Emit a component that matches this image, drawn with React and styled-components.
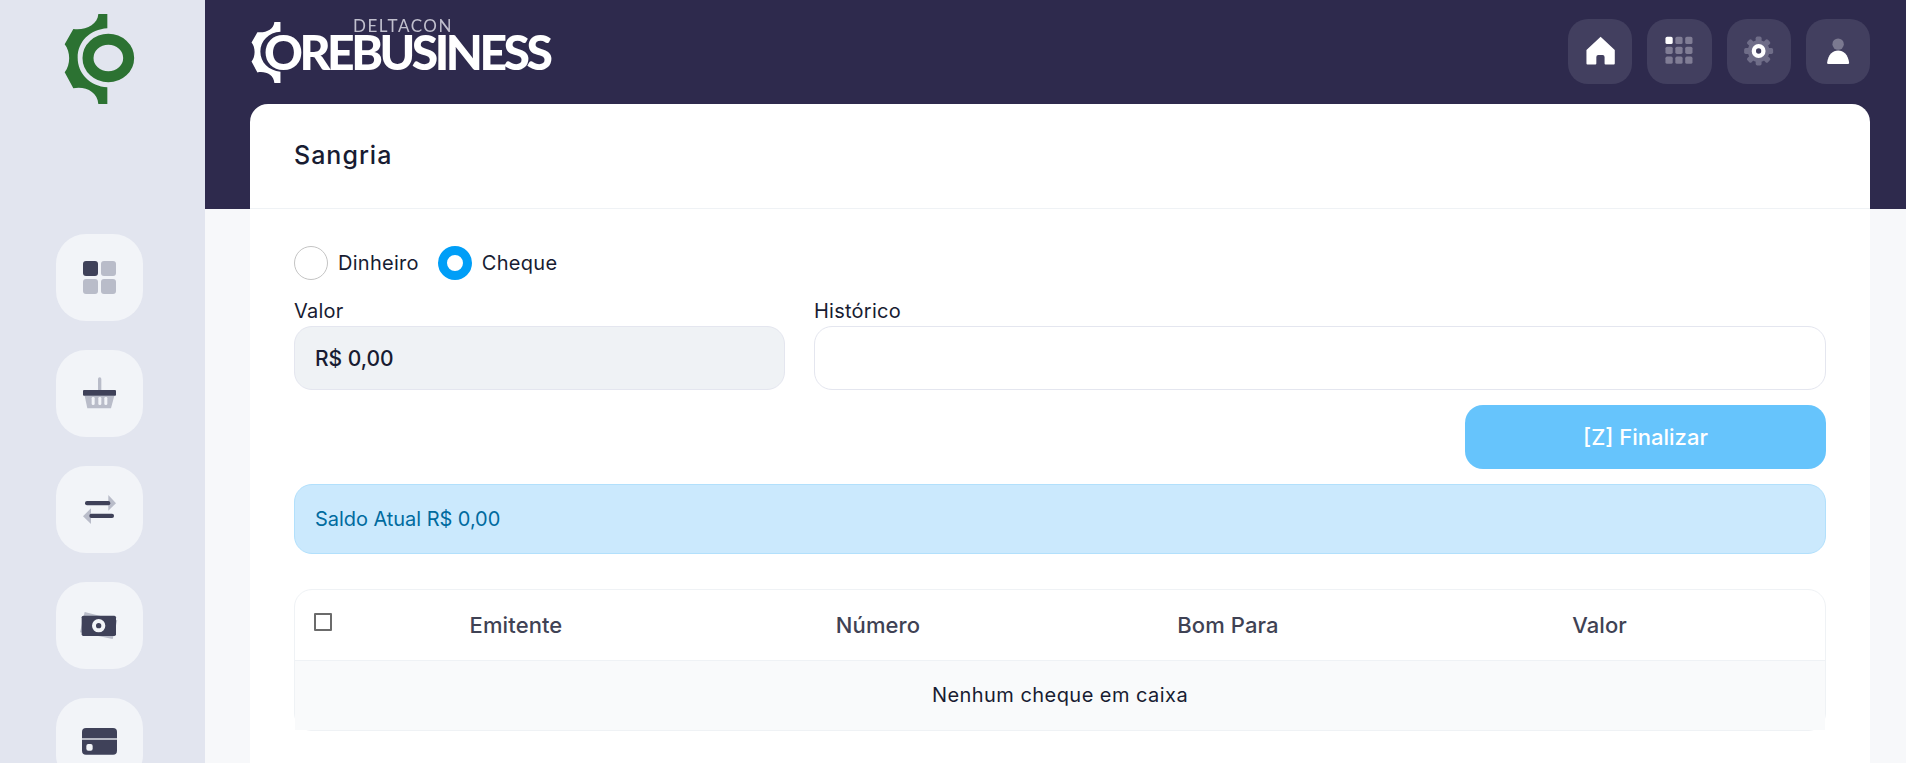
import React from "react";
import styled, { createGlobalStyle } from "styled-components";

const Global = createGlobalStyle`
  html, body { margin: 0; height: 100%; overflow: hidden; background: #f7f8fa; }
  body { font-family: Inter, "Noto Sans", sans-serif; color: #181c32; }
  * { box-sizing: border-box; }
`;

const Shell = styled.div`
  display: flex;
  width: 100%;
  height: 763px;
  overflow: hidden;
`;
const Sidebar = styled.aside`
  flex: 0 0 205px;
  background: #e2e5ef;
  display: flex;
  flex-direction: column;
  align-items: flex-start;
  padding-left: 56px;
`;
const SideLogo = styled.svg`
  display: block;
  flex: none;
  margin-left: -6px;
  width: 100px;
  height: 115px;
  filter: blur(0.3px);
`;
const SideNav = styled.nav`
  margin-top: 119px;
  display: flex;
  flex-direction: column;
  gap: 29px;
`;
const SideButton = styled.a`
  display: block;
  flex: none;
  width: 87px;
  height: 87px;
  border-radius: 30px;
  background: #f2f4f8;
  svg { display: block; width: 87px; height: 87px; }
`;
const Main = styled.main`
  flex: 1;
  min-width: 0;
  padding: 0 36px 0 45px;
  background: linear-gradient(#2e2a4d 209px, #f7f8fa 209px);
`;
const TopBar = styled.header`
  height: 104px;
  display: flex;
  justify-content: space-between;
  align-items: flex-start;
`;
const Brand = styled.div`
  display: flex;
  align-items: flex-start;
  margin: 22px 0 0 1px;
  color: #fff;
  filter: blur(0.45px);
`;
const BrandGear = styled.svg`
  display: block;
  flex: none;
  width: 30px;
  height: 61px;
`;
const BrandText = styled.div`
  display: flex;
  flex-direction: column;
  margin-left: -17px;
`;
const BrandSmall = styled.span`
  font-family: Lato, sans-serif;
  font-size: 17px;
  line-height: 12px;
  letter-spacing: 1.55px;
  color: #c0bfcd;
  margin: -2px 0 0 89px;
  height: 12px;
`;
const BrandWord = styled.span`
  font-family: Lato, sans-serif;
  font-weight: 900;
  font-size: 48px;
  line-height: 40px;
  letter-spacing: -3.5px;
  white-space: nowrap;
`;
const TopActions = styled.div`
  display: flex;
  gap: 15px;
  margin-top: 19px;
`;
const TopButton = styled.a`
  display: block;
  width: 64.25px;
  height: 65px;
  border-radius: 20px;
  background: #423f5f;
  svg { display: block; width: 100%; height: 65px; }
`;
const Card = styled.section`
  height: 659px;
  background: #fff;
  border-radius: 18px 18px 0 0;
`;
const CardHeader = styled.div`
  height: 105px;
  padding: 0 44px 2px;
  display: flex;
  align-items: center;
  border-bottom: 1px solid #eff2f5;
`;
const CardTitle = styled.h1`
  margin: 0;
  font-size: 25px;
  font-weight: 500;
  letter-spacing: 1px;
  color: #181c32;
`;
const CardBody = styled.div`
  padding: 37px 44px 0;
`;
const RadioRow = styled.div`
  display: flex;
  align-items: center;
  height: 34px;
  gap: 19px;
`;
const RadioLabel = styled.label`
  display: flex;
  align-items: center;
  gap: 10px;
  font-size: 20px;
  letter-spacing: 0.28px;
  color: #181c32;
`;
const RadioInput = styled.input`
  appearance: none;
  margin: 0;
  width: 34px;
  height: 34px;
  border-radius: 50%;
  border: 1px solid #c4c4c4;
  background: #fff;
  &:checked {
    border: 9px solid #009ef7;
  }
`;
const FormGrid = styled.div`
  display: grid;
  grid-template-columns: 491px 1fr;
  column-gap: 29px;
  margin-top: 12px;
`;
const Field = styled.div`
  display: flex;
  flex-direction: column;
`;
const FieldLabel = styled.label`
  height: 34px;
  padding-top: 7px;
  font-size: 20px;
  line-height: 24px;
  letter-spacing: 0.25px;
  color: #181c32;
`;
const TextInput = styled.input`
  width: 100%;
  height: 64px;
  padding: 0 20px;
  border: 1px solid #e4e6ef;
  border-radius: 18px;
  outline: none;
  font: 500 21px Inter, sans-serif;
  color: #181c32;
  background: ${(p) => (p.$filled ? "#eff2f5" : "#fff")};
`;
const Actions = styled.div`
  display: flex;
  justify-content: flex-end;
  margin-top: 15px;
`;
const SubmitButton = styled.button`
  width: 361px;
  height: 64px;
  border: 0;
  border-radius: 18px;
  background: #66c4fc;
  color: #fff;
  font: 500 22px Inter, sans-serif;
`;
const Alert = styled.div`
  margin-top: 15px;
  height: 70px;
  padding: 0 20px;
  display: flex;
  align-items: center;
  border: 1px solid #b2e0fc;
  border-radius: 18px;
  background: #cbe9fd;
  color: #006b9f;
  font-size: 20px;
  letter-spacing: -0.05px;
`;
const TableWrap = styled.div`
  margin-top: 35px;
  border: 1px solid #eff2f5;
  border-radius: 18px;
  height: 142px;
`;
const Table = styled.table`
  width: 100%;
  table-layout: fixed;
  border-collapse: collapse;
`;
const Head = styled.th`
  height: 70px;
  border-bottom: 1px solid #eff2f5;
  padding: ${(p) => (p.$last ? "0 18px 0 0" : "0")};
  font-size: 22px;
  font-weight: 500;
  letter-spacing: 0.1px;
  color: #3f4254;
  text-align: center;
`;
const CheckHead = styled(Head)`
  text-align: left;
  padding: 0 0 5px 19px;
`;
const Check = styled.input`
  appearance: none;
  display: block;
  margin: 0;
  width: 18px;
  height: 18px;
  border: 2px solid #6b6b6b;
  border-radius: 1px;
  background: #fff;
`;
const EmptyCell = styled.td`
  height: 70px;
  padding-top: 1px;
  background: #f9fafb;
  text-align: center;
  font-size: 20px;
  letter-spacing: 0.45px;
  color: #181c32;
`;

const D = "#3f4159";
const L = "#b9bcc9";

const gearPath =
  "M145 42H172V85C120 88 83 125 83 173C83 221 120 258 172 262V312H145C143 275 105 258 70 265L44 217C62 195 62 155 44 133L70 87C105 92 143 75 145 42Z";

function Dashboard() {
  return (
    <svg viewBox="0 0 261 261">
      <rect x="81" y="81" width="45" height="45" rx="9" fill={D} />
      <rect x="135" y="81" width="45" height="45" rx="9" fill={L} />
      <rect x="81" y="135" width="45" height="45" rx="9" fill={L} />
      <rect x="135" y="135" width="45" height="45" rx="9" fill={L} />
    </svg>
  );
}
function Basket() {
  return (
    <svg viewBox="0 0 261 261">
      <rect x="126" y="82" width="10" height="50" rx="5" fill={L} />
      <path d="M86 137H175L165 175H94Z" fill={L} />
      <rect x="81" y="120" width="99" height="17" rx="3" fill={D} />
      <rect x="107" y="141" width="9" height="24" rx="4" fill="#f2f4f8" />
      <rect x="127" y="141" width="9" height="24" rx="4" fill="#f2f4f8" />
      <rect x="145" y="141" width="9" height="24" rx="4" fill="#f2f4f8" />
    </svg>
  );
}
function Transfer() {
  return (
    <svg viewBox="0 0 261 261">
      <path d="M157 87L180 112L157 134Z" fill={L} />
      <path d="M105 127L81 151L105 174Z" fill={L} />
      <rect x="87" y="105" width="76" height="13" rx="6" fill={D} />
      <rect x="100" y="143" width="74" height="13" rx="6" fill={D} />
    </svg>
  );
}
function Money() {
  return (
    <svg viewBox="0 0 261 261">
      <path d="M86 90L184 115L170 171L72 151Z" fill={L} />
      <rect x="77" y="101" width="103" height="61" rx="5" fill={D} />
      <circle cx="128" cy="131" r="14" fill="none" stroke="#f2f4f8" strokeWidth="12" />
    </svg>
  );
}
function CardIcon() {
  return (
    <svg viewBox="0 0 261 261">
      <rect x="78" y="90" width="105" height="80" rx="12" fill={D} />
      <rect x="78" y="121" width="105" height="4" fill="#f2f4f8" />
      <rect x="91" y="138" width="19" height="20" rx="6" fill="#f2f4f8" />
    </svg>
  );
}
function Home() {
  return (
    <svg viewBox="0 0 195 195">
      <path
        d="M99 53L142 93V134Q142 137 139 137H114Q111 137 111 134V114Q111 108 105 108H92Q86 108 86 114V134Q86 137 83 137H59Q56 137 56 134V93Z"
        fill="#fff"
      />
    </svg>
  );
}
function Apps() {
  const cells = [];
  [53, 83, 113].forEach((y, r) =>
    [56, 86, 116].forEach((x, c) =>
      cells.push(
        <rect
          key={`${r}-${c}`}
          x={x}
          y={y}
          width="22"
          height="22"
          rx="5"
          fill={r === 0 && c === 0 ? "#fff" : "#807d95"}
        />
      )
    )
  );
  return <svg viewBox="0 0 195 195">{cells}</svg>;
}
function Settings() {
  return (
    <svg viewBox="0 0 195 195">
      <g fill="#6f6d88">
        <circle cx="96" cy="96" r="33" />
        {[0, 45, 90, 135, 180, 225, 270, 315].map((a) => (
          <rect key={a} x="87" y="52" width="18" height="20" rx="5" transform={`rotate(${a} 96 96)`} />
        ))}
      </g>
      <circle cx="96" cy="96" r="21" fill="#fff" />
      <circle cx="96" cy="96" r="8" fill="#423f5f" />
    </svg>
  );
}
function User() {
  return (
    <svg viewBox="0 0 192 192">
      <circle cx="96" cy="74" r="17" fill="#7b7990" />
      <path d="M63 130C66 105 80 93 96 93C112 93 126 105 129 130Q129 133 125 133H67Q63 133 63 130Z" fill="#fff" />
    </svg>
  );
}

const sideItems = [Dashboard, Basket, Transfer, Money, CardIcon];
const topItems = [Home, Apps, Settings, User];

export default function App() {
  return (
    <>
      <Global />
      <Shell>
        <Sidebar>
          <SideLogo viewBox="0 0 300 345">
            <path d={gearPath} fill="#2c7232" />
            <ellipse cx="175" cy="174" rx="61" ry="56.5" fill="none" stroke="#2c7232" strokeWidth="33" />
          </SideLogo>
          <SideNav>
            {sideItems.map((Icon, i) => (
              <SideButton key={i}>
                <Icon />
              </SideButton>
            ))}
          </SideNav>
        </Sidebar>
        <Main>
          <TopBar>
            <Brand>
              <BrandGear viewBox="44 42 128 270">
                <path d={gearPath} fill="#fff" />
              </BrandGear>
              <BrandText>
                <BrandSmall>DELTACON</BrandSmall>
                <BrandWord>OREBUSINESS</BrandWord>
              </BrandText>
            </Brand>
            <TopActions>
              {topItems.map((Icon, i) => (
                <TopButton key={i}>
                  <Icon />
                </TopButton>
              ))}
            </TopActions>
          </TopBar>
          <Card>
            <CardHeader>
              <CardTitle>Sangria</CardTitle>
            </CardHeader>
            <CardBody>
              <RadioRow>
                <RadioLabel>
                  <RadioInput type="radio" name="tipo" />
                  Dinheiro
                </RadioLabel>
                <RadioLabel>
                  <RadioInput type="radio" name="tipo" defaultChecked />
                  Cheque
                </RadioLabel>
              </RadioRow>
              <FormGrid>
                <Field>
                  <FieldLabel>Valor</FieldLabel>
                  <TextInput $filled readOnly value="R$ 0,00" />
                </Field>
                <Field>
                  <FieldLabel>Histórico</FieldLabel>
                  <TextInput readOnly value="" />
                </Field>
              </FormGrid>
              <Actions>
                <SubmitButton>[Z] Finalizar</SubmitButton>
              </Actions>
              <Alert>Saldo Atual R$ 0,00</Alert>
              <TableWrap>
                <Table>
                  <colgroup>
                    <col style={{ width: "45px" }} />
                    <col style={{ width: "352px" }} />
                    <col style={{ width: "372px" }} />
                    <col style={{ width: "328px" }} />
                    <col style={{ width: "433px" }} />
                  </colgroup>
                  <thead>
                    <tr>
                      <CheckHead>
                        <Check type="checkbox" />
                      </CheckHead>
                      <Head>Emitente</Head>
                      <Head>Número</Head>
                      <Head>Bom Para</Head>
                      <Head $last>Valor</Head>
                    </tr>
                  </thead>
                  <tbody>
                    <tr>
                      <EmptyCell colSpan={5}>Nenhum cheque em caixa</EmptyCell>
                    </tr>
                  </tbody>
                </Table>
              </TableWrap>
            </CardBody>
          </Card>
        </Main>
      </Shell>
    </>
  );
}
